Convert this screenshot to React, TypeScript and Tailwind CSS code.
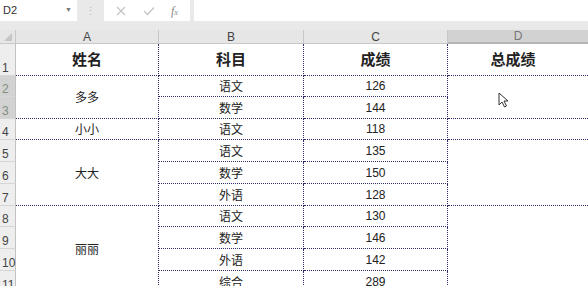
const CJK = "font-['Noto_Sans_CJK_SC','Liberation_Sans',sans-serif]";
const LINE = "border-dotted border-[#2c2c6e]";

type Row = { num: number; h: string; sel?: boolean };

const rows: Row[] = [
  { num: 1, h: "h-[32px]" },
  { num: 2, h: "h-[21px]", sel: true },
  { num: 3, h: "h-[22px]", sel: true },
  { num: 4, h: "h-[21px]" },
  { num: 5, h: "h-[22px]" },
  { num: 6, h: "h-[22px]" },
  { num: 7, h: "h-[22px]" },
  { num: 8, h: "h-[21px]" },
  { num: 9, h: "h-[22px]" },
  { num: 10, h: "h-[22px]" },
  { num: 11, h: "h-[22px]" },
];

const subjects = [
  ["语文", "126"],
  ["数学", "144"],
  ["语文", "118"],
  ["语文", "135"],
  ["数学", "150"],
  ["外语", "128"],
  ["语文", "130"],
  ["数学", "146"],
  ["外语", "142"],
  ["综合", "289"],
];

function Cursor() {
  return (
    <svg width="11" height="16" viewBox="0 0 11 16" className="absolute left-[498px] top-[92px]">
      <path d="M1 1 L1 13 L4 10 L6.5 15 L8.5 14 L6 9 L10 9 Z" fill="#fff" stroke="#333" strokeWidth="1" strokeLinejoin="round" />
    </svg>
  );
}

function TopBar() {
  return (
    <div className="flex h-[21px] bg-[#e9e9e9]">
      <div className="flex w-[77px] items-center justify-between bg-white pl-[3px] pr-[5px] font-['Liberation_Sans',sans-serif] text-[11px] text-[#333]">
        <span>D2</span>
        <span className="text-[7px] text-[#777]">▼</span>
      </div>
      <div className="flex w-[27px] items-center justify-center text-[11px] leading-none text-[#bbb]">⋮</div>
      <div className="flex w-[86px] items-center justify-around bg-white px-[4px] text-[#c4c4c4]">
        <svg width="10" height="10" viewBox="0 0 10 10">
          <path d="M1 1 L9 9 M9 1 L1 9" stroke="#c4c4c4" strokeWidth="1.2" />
        </svg>
        <svg width="12" height="10" viewBox="0 0 12 10">
          <path d="M1 5 L4.5 8.5 L11 1.5" stroke="#c4c4c4" strokeWidth="1.3" fill="none" />
        </svg>
        <span className="font-['Liberation_Serif',serif] text-[12px] italic text-[#888]">
          f<span className="text-[8px]">x</span>
        </span>
      </div>
      <div className="w-[4px]" />
      <div className="flex-1 bg-white" />
    </div>
  );
}

function ColumnHeaders() {
  return (
    <div className="flex h-[23px] bg-[#e9e9e9] pt-[9px] font-['Liberation_Sans',sans-serif] text-[12px] leading-none text-[#444]">
      <div className="relative w-[16px] border-r border-b border-[#c8c8c8] bg-[#e6e6e6]">
        <div className="absolute right-[3px] bottom-[2px] h-0 w-0 border-t-[8px] border-l-[8px] border-t-transparent border-l-transparent border-b-0 border-r-[8px] border-r-[#c6c6c6]" />
      </div>
      <div className="flex w-[143px] items-center justify-center border-r border-b border-[#c8c8c8] bg-[#e6e6e6]">A</div>
      <div className="flex w-[145px] items-center justify-center border-r border-b border-[#c8c8c8] bg-[#e6e6e6]">B</div>
      <div className="flex w-[144px] items-center justify-center border-r border-b border-[#c8c8c8] bg-[#e6e6e6]">C</div>
      <div className="flex flex-1 items-center justify-center border-b-2 border-[#b5b5b5] bg-[#d2d2d2] text-[#777]">D</div>
    </div>
  );
}

export default function App() {
  return (
    <div className="relative h-[286px] w-[588px] overflow-hidden bg-white">
      <TopBar />
      <ColumnHeaders />
      <div className="grid grid-cols-[16px_143px_145px_144px_1fr] text-[#222]">
        {/* row headers */}
        {rows.map((r, i) => (
          <div
            key={r.num}
            style={{ gridRow: i + 1, gridColumn: 1 }}
            className={`${r.h} flex items-end border-r border-b border-r-[#c2c2c2] border-b-[#d6d6d6] pb-[1px] pl-[2px] font-['Liberation_Sans',sans-serif] text-[12px] leading-none ${
              r.sel ? "bg-[#d2d2d2] text-[#7f907f]" : "bg-[#eeeeee] text-[#444]"
            }`}
          >
            {r.num}
          </div>
        ))}

        {/* header row */}
        <div className={`col-start-2 row-start-1 flex items-center justify-center border-r border-b ${LINE} ${CJK} text-[15px] font-bold`}>姓名</div>
        <div className={`col-start-3 row-start-1 flex items-center justify-center border-r border-b ${LINE} ${CJK} text-[15px] font-bold`}>科目</div>
        <div className={`col-start-4 row-start-1 flex items-center justify-center border-r border-b ${LINE} ${CJK} text-[15px] font-bold`}>成绩</div>
        <div className={`col-start-5 row-start-1 flex items-center justify-center border-b ${LINE} ${CJK} pr-[10px] text-[15px] font-bold`}>总成绩</div>

        {/* names, merged */}
        <div className={`col-start-2 row-start-2 row-span-2 flex items-center justify-center border-r border-b ${LINE} ${CJK} text-[12px]`}>多多</div>
        <div className={`col-start-2 row-start-4 flex items-center justify-center border-r border-b ${LINE} ${CJK} text-[12px]`}>小小</div>
        <div className={`col-start-2 row-start-5 row-span-3 flex items-center justify-center border-r border-b ${LINE} ${CJK} text-[12px]`}>大大</div>
        <div className={`col-start-2 row-start-8 row-span-4 flex items-center justify-center border-r border-b ${LINE} ${CJK} text-[12px]`}>丽丽</div>

        {/* subjects and scores */}
        {subjects.map(([s], i) => (
          <div key={"s" + i} style={{ gridRow: i + 2, gridColumn: 3 }} className={`flex items-center justify-center border-r border-b ${LINE} ${CJK} text-[12px]`}>
            {s}
          </div>
        ))}
        {subjects.map(([, v], i) => (
          <div key={"v" + i} style={{ gridRow: i + 2, gridColumn: 4 }} className={`flex items-center justify-center border-r border-b ${LINE} font-['Liberation_Sans',sans-serif] text-[12px]`}>
            {v}
          </div>
        ))}

        {/* total column, merged */}
        <div className={`col-start-5 row-start-2 row-span-2 border-b ${LINE}`} />
        <div className={`col-start-5 row-start-4 border-b ${LINE}`} />
        <div className={`col-start-5 row-start-5 row-span-3 border-b ${LINE}`} />
        <div className={`col-start-5 row-start-8 row-span-4 border-b ${LINE}`} />
      </div>
      <Cursor />
    </div>
  );
}
